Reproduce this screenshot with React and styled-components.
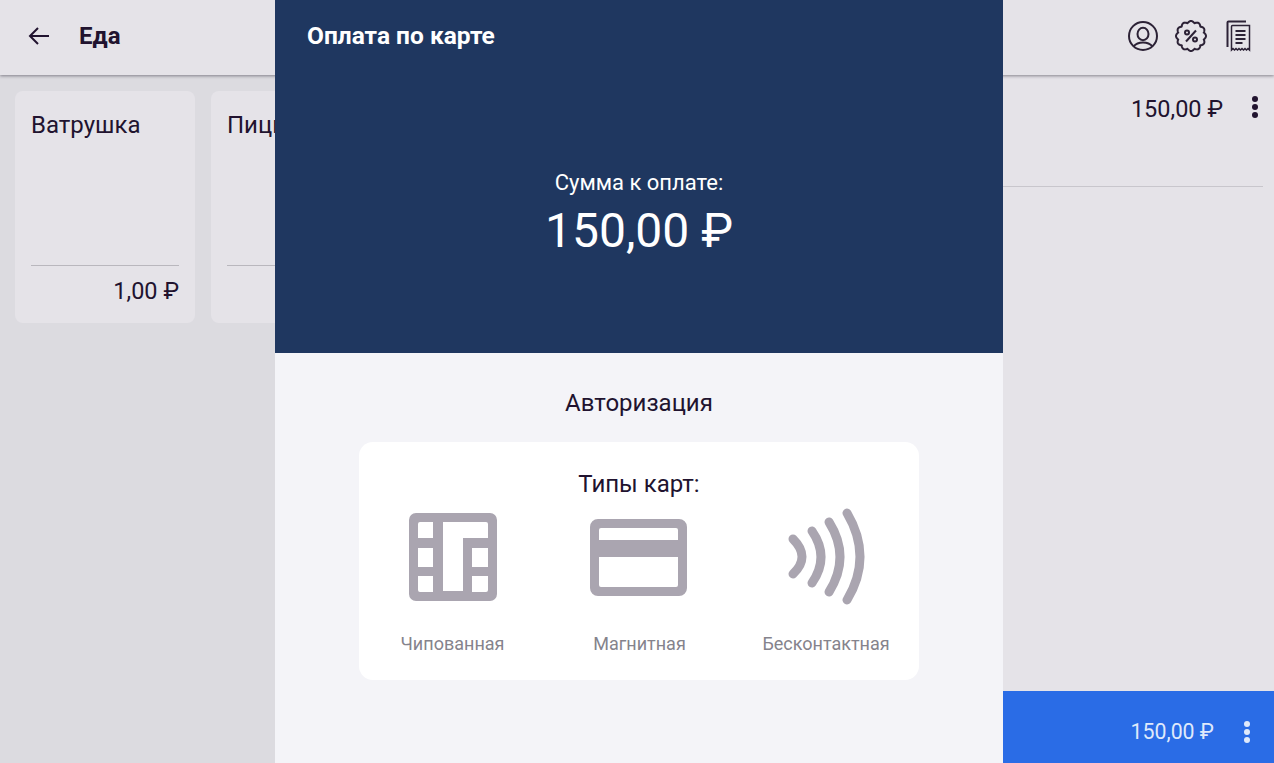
import React from 'react';
import styled, { createGlobalStyle } from 'styled-components';

const GlobalStyle = createGlobalStyle`
    html, body {
        margin: 0;
        padding: 0;
        height: 100%;
        overflow: hidden;
    }

    body {
        font-family: Roboto, "Noto Sans", sans-serif;
        color: #21132f;
        background: #dcdbe0;
    }
`

const Page = styled.div`
    position: relative;
    width: 1274px;
    height: 763px;
    display: flex;
    flex-direction: column;
    overflow: hidden;
`

const Header = styled.header`
    height: 75px;
    flex: none;
    box-sizing: border-box;
    display: flex;
    align-items: center;
    padding: 0 22px 4px 27px;
    background: #e5e3e8;
    box-shadow: 0 1px 3px rgba(40, 35, 50, 0.5);
    position: relative;
    z-index: 1;
`

const BackButton = styled.div`
    width: 24px;
    height: 24px;
    margin-right: 28px;
`

const Title = styled.h1`
    flex: 1;
    margin: 0;
    font-size: 24px;
    font-weight: 700;
    line-height: 28px;
`

const HeaderIcons = styled.div`
    display: flex;
    align-items: center;
    gap: 16px;
`

const Content = styled.div`
    flex: 1;
    display: flex;
    min-height: 0;
`

const Catalog = styled.div`
    flex: 1;
    display: flex;
    align-items: flex-start;
    gap: 16px;
    padding: 16px 15px;
`

const Card = styled.div`
    width: 180px;
    height: 232px;
    box-sizing: border-box;
    display: flex;
    flex-direction: column;
    padding: 16px 16px 0;
    border-radius: 8px;
    background: #e5e3e8;
`

const CardName = styled.div`
    flex: 1;
    font-size: 24px;
    line-height: 36px;
`

const CardPrice = styled.div`
    height: 58px;
    box-sizing: border-box;
    border-top: 1px solid #b9b7bd;
    font-size: 23.5px;
    line-height: 50px;
    text-align: right;
`

const Cart = styled.aside`
    width: 400px;
    flex: none;
    display: flex;
    flex-direction: column;
    background: #e5e3e8;
`

const CartItem = styled.div`
    height: 112px;
    box-sizing: border-box;
    margin-right: 11px;
    padding: 17px 0 0;
    display: flex;
    justify-content: flex-end;
    border-bottom: 1px solid #c8c6cc;
`

const Amount = styled.span`
    font-size: ${p => p.$size}px;
    line-height: 34px;
    color: ${p => p.$color};
`

const Dots = styled.div`
    width: 8px;
    display: flex;
    flex-direction: column;
    align-items: center;
    gap: 2px;
    margin-left: ${p => p.$gap}px;
    margin-right: ${p => p.$right}px;
    padding-top: ${p => p.$top}px;
`

const Dot = styled.i`
    display: block;
    width: 6px;
    height: 6px;
    border-radius: 50%;
    background: ${p => p.$color};
`

const CartSpacer = styled.div`
    flex: 1;
`

const CartTotal = styled.div`
    height: 72px;
    flex: none;
    box-sizing: border-box;
    padding-top: 9px;
    display: flex;
    align-items: center;
    justify-content: flex-end;
    background: #2a6ce6;
`

const Modal = styled.section`
    position: absolute;
    top: 0;
    left: 275px;
    width: 728px;
    height: 763px;
    z-index: 2;
    display: flex;
    flex-direction: column;
    background: #f4f4f8;
`

const ModalHead = styled.div`
    height: 353px;
    flex: none;
    box-sizing: border-box;
    display: flex;
    flex-direction: column;
    padding: 22px 32px 0;
    background: #1f3760;
    color: #fff;
`

const ModalTitle = styled.h2`
    margin: 0;
    font-size: 24.5px;
    font-weight: 700;
    line-height: 28px;
`

const SumLabel = styled.div`
    margin-top: 119px;
    font-size: 22px;
    line-height: 28px;
    text-align: center;
`

const SumValue = styled.div`
    margin-top: 6px;
    font-size: 48px;
    line-height: 56px;
    text-align: center;
`

const ModalBody = styled.div`
    flex: 1;
    display: flex;
    flex-direction: column;
    align-items: center;
    padding-top: 35px;
`

const Status = styled.div`
    font-size: 24px;
    line-height: 30px;
`

const TypesPanel = styled.div`
    width: 560px;
    height: 238px;
    margin-top: 24px;
    box-sizing: border-box;
    padding-top: 28px;
    border-radius: 14px;
    background: #fff;
`

const TypesTitle = styled.div`
    font-size: 24px;
    line-height: 28px;
    text-align: center;
`

const TypesRow = styled.div`
    display: grid;
    grid-template-columns: 187px 187px 186px;
`

const TypeItem = styled.div`
    display: flex;
    flex-direction: column;
    align-items: center;
`

const TypeIcon = styled.div`
    height: 104px;
    flex: none;
    display: flex;
    align-items: center;
    justify-content: center;
    margin-top: 7px;
    padding-right: ${p => p.$shift || 0}px;
`

const TypeLabel = styled.div`
    margin-top: 23px;
    font-size: 18px;
    line-height: 24px;
    color: #85838c;
`

const ICON_DARK = '#2c2236'
const ICON_GREY = '#aaa5b0'

// scalloped outline of the discount badge, 12 bumps around the centre
const badgePath = () => {
    const points = []
    for (let i = 0; i < 144; i++) {
        const angle = (i / 144) * Math.PI * 2
        const radius = 13.2 + 1.8 * Math.abs(Math.cos(angle * 6))
        points.push(`${(16 + radius * Math.sin(angle)).toFixed(2)} ${(16 - radius * Math.cos(angle)).toFixed(2)}`)
    }
    return `M${points.join('L')}Z`
}

const BackIcon = () => (
    <svg width="24" height="24" viewBox="0 0 24 24" fill="none" stroke="#21132f" strokeWidth="2">
        <path d="M22 12H3M11 4l-8 8 8 8" />
    </svg>
)

const UserIcon = () => (
    <svg width="32" height="32" viewBox="0 0 32 32" fill="none" stroke={ICON_DARK} strokeWidth="2">
        <circle cx="16" cy="16" r="14" />
        <ellipse cx="16" cy="14" rx="5.500" ry="6.200" />
        <path d="M6.500 26.500C9 23.500 12 22.500 16 22.500s7 1 9.500 4" />
    </svg>
)

const DiscountIcon = () => (
    <svg width="32" height="32" viewBox="0 0 32 32" fill="none" stroke={ICON_DARK} strokeWidth="2" strokeLinejoin="round">
        <path d={badgePath()} />
        <circle cx="12" cy="12.500" r="2" />
        <circle cx="20" cy="19.500" r="2" />
        <path d="M21 10.500l-10 11" />
    </svg>
)

const ReceiptIcon = () => (
    <svg width="29" height="32" viewBox="-3 0 29 32" fill="none" stroke={ICON_DARK}>
        <path d="M1.500 27V2.500c0-.6.400-1 1-1H20" strokeWidth="2" />
        <path d="M5.500 30V6.500c0-.600.400-1 1-1h17v24.500l-1.500-1.400-1.500 1.400-1.500-1.400-1.500 1.400-1.500-1.400-1.500 1.400-1.500-1.400-1.500 1.400-1.500-1.400-1.500 1.400-1.500-1.400-1.500 1.400z" strokeWidth="1.500" />
        <path d="M9.500 11h10M9.500 15h10M9.500 19h10M9.500 23h7" strokeWidth="1.800" />
    </svg>
)

const ChipIcon = () => (
    <svg width="88" height="88" viewBox="0 0 88 88">
        <path
            fill={ICON_GREY}
            fillRule="evenodd"
            d="M7 0h74a7 7 0 0 1 7 7v74a7 7 0 0 1-7 7H7a7 7 0 0 1-7-7V7a7 7 0 0 1 7-7z
               M11 9a2 2 0 0 0-2 2v14h15V9z
               M9 35v19h15V35z
               M9 63v14a2 2 0 0 0 2 2h13V63z
               M34 9v69h20V25h25V11a2 2 0 0 0-2-2z
               M63 35v19h16V35z
               M63 63v16h14a2 2 0 0 0 2-2V63z"
        />
    </svg>
)

const CardIcon = () => (
    <svg width="97" height="77" viewBox="0 0 97 77">
        <path
            fill={ICON_GREY}
            fillRule="evenodd"
            d="M8 0h81a8 8 0 0 1 8 8v61a8 8 0 0 1-8 8H8a8 8 0 0 1-8-8V8a8 8 0 0 1 8-8z
               M11 9a2 2 0 0 0-2 2v10h79V11a2 2 0 0 0-2-2z
               M9 38v28a2 2 0 0 0 2 2h75a2 2 0 0 0 2-2V38z"
        />
    </svg>
)

const ContactlessIcon = () => (
    <svg width="82" height="104" viewBox="0 0 82 104" fill="none" stroke={ICON_GREY} strokeWidth="9" strokeLinecap="round">
        <path d="M8 34Q26 52 8 69" />
        <path d="M27 26Q45 52 27 78" />
        <path d="M44 17Q66 52 44 87" />
        <path d="M62 8Q88 52 62 95" />
    </svg>
)

const MoreDots = ({ color, gap, right, top }) => (
    <Dots $gap={gap} $right={right} $top={top}>
        <Dot $color={color} />
        <Dot $color={color} />
        <Dot $color={color} />
    </Dots>
)

const App = () => {
    return (
        <Page>
            <GlobalStyle />
            <Header>
                <BackButton><BackIcon /></BackButton>
                <Title>Еда</Title>
                <HeaderIcons>
                    <UserIcon />
                    <DiscountIcon />
                    <ReceiptIcon />
                </HeaderIcons>
            </Header>
            <Content>
                <Catalog>
                    <Card>
                        <CardName>Ватрушка</CardName>
                        <CardPrice>1,00 ₽</CardPrice>
                    </Card>
                    <Card>
                        <CardName>Пицца</CardName>
                        <CardPrice>1,00 ₽</CardPrice>
                    </Card>
                </Catalog>
                <Cart>
                    <CartItem>
                        <Amount $size={23.5} $color="#21132f">150,00 ₽</Amount>
                        <MoreDots color="#21132f" gap={28} right={4} top={4} />
                    </CartItem>
                    <CartSpacer />
                    <CartTotal>
                        <Amount $size={21.3} $color="#dfe9fb">150,00 ₽</Amount>
                        <MoreDots color="#dfe9fb" gap={29} right={23} top={0} />
                    </CartTotal>
                </Cart>
            </Content>
            <Modal>
                <ModalHead>
                    <ModalTitle>Оплата по карте</ModalTitle>
                    <SumLabel>Сумма к оплате:</SumLabel>
                    <SumValue>150,00 ₽</SumValue>
                </ModalHead>
                <ModalBody>
                    <Status>Авторизация</Status>
                    <TypesPanel>
                        <TypesTitle>Типы карт:</TypesTitle>
                        <TypesRow>
                            <TypeItem>
                                <TypeIcon><ChipIcon /></TypeIcon>
                                <TypeLabel>Чипованная</TypeLabel>
                            </TypeItem>
                            <TypeItem>
                                <TypeIcon $shift={2}><CardIcon /></TypeIcon>
                                <TypeLabel>Магнитная</TypeLabel>
                            </TypeItem>
                            <TypeItem>
                                <TypeIcon><ContactlessIcon /></TypeIcon>
                                <TypeLabel>Бесконтактная</TypeLabel>
                            </TypeItem>
                        </TypesRow>
                    </TypesPanel>
                </ModalBody>
            </Modal>
        </Page>
    )
}

export default App
